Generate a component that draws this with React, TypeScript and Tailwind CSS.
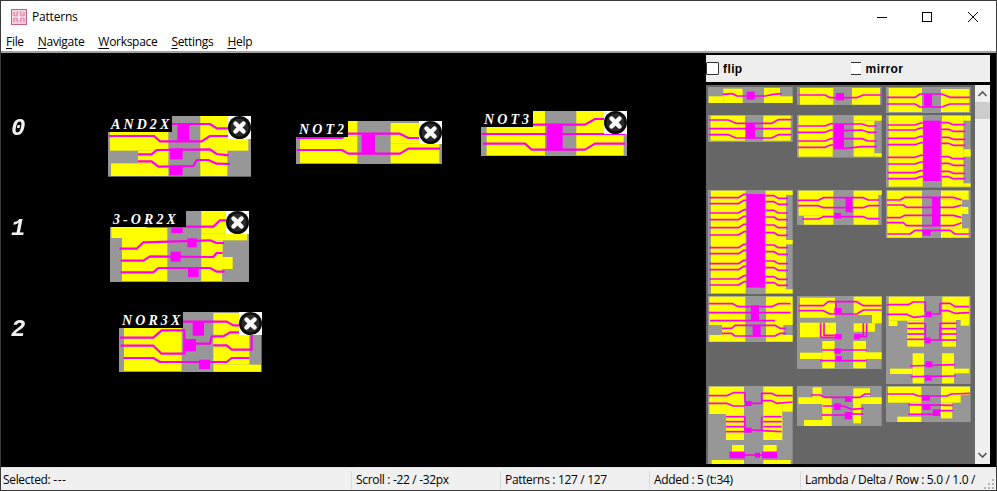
import React from 'react';

type Rect = [number, number, number, number];
type Art = { box: Rect; y: Rect[]; m: Rect[]; l: string[] };

const rects = (list: Rect[], fill: string) =>
  list.map(([a, b, c, d], i) => <rect key={i} x={a} y={b} width={c - a} height={d - b} fill={fill} />);

// coordinates are 3x screen pixels, read off the zoomed reference
const Layout: React.FC<{ art: Art; sw?: number }> = ({ art, sw = 5 }) => {
  const [a, b, c, d] = art.box;
  return (
    <svg width={(c - a) / 3} height={(d - b) / 3} viewBox={`${a} ${b} ${c - a} ${d - b}`} className="block">
      <rect x={a} y={b} width={c - a} height={d - b} fill="#979797" />
      {rects(art.y, '#ffff00')}
      {art.l.map((p, i) => (
        <polyline key={i} points={p} fill="none" stroke="#ff00ee" strokeWidth={sw} strokeLinejoin="round" />
      ))}
      {rects(art.m, '#ff00ff')}
    </svg>
  );
};

const fan = (ys: number[], x1: number, x2: number, dy: number) =>
  ys.map((y) => `${x1},${y} ${x2 - 25},${y} ${x2 - 8},${y + dy} ${x2},${y + dy}`);

const CloseBadge = () => (
  <div className="absolute top-0 right-0 w-[23px] h-[23px] bg-white">
    <svg width="23" height="23" viewBox="0 0 23 23" className="block blur-[0.5px]">
      <circle cx="11.5" cy="11.5" r="11.5" fill="#0c0c0c" />
      <circle cx="11.5" cy="11.5" r="9" fill="#2a2a2a" />
      <path d="M7.5 7.5 15.5 15.5M15.5 7.5 7.5 15.5" stroke="#fff" strokeWidth="4.4" strokeLinecap="round" />
    </svg>
  </div>
);

const PlacedCell: React.FC<{ className: string; name: string; labelW: string; art: Art }> = ({ className, name, labelW, art }) => (
  <div className={`absolute ${className}`}>
    <Layout art={art} sw={6.5} />
    <div className={`absolute top-0 left-0 h-[16px] bg-black text-white font-['Liberation_Serif',serif] font-bold italic text-[14px] leading-[18px] tracking-[3.1px] pl-[3px] whitespace-nowrap overflow-hidden ${labelW}`}>
      {name}
    </div>
    <CloseBadge />
  </div>
);

const and2x: Art = {
  box: [324, 348, 753, 530],
  y: [[330, 396, 505, 452], [414, 452, 505, 490], [333, 490, 505, 528], [601, 348, 684, 417], [601, 417, 745, 452], [601, 452, 682, 528]],
  m: [[532, 372, 568, 422], [510, 445, 548, 478], [508, 498, 548, 526]],
  l: [
    '516,372 630,372 650,385 684,385',
    '326,408 462,408 480,424 605,424 630,408 690,408',
    '414,463 455,463 470,450 630,448 650,462 686,466',
    '414,484 455,484 475,500 580,498 590,480 625,480 650,491 690,492',
  ],
};
const not2: Art = {
  box: [48, 94, 486, 224],
  y: [[60, 140, 232, 220], [204, 94, 232, 140], [332, 100, 486, 162], [332, 162, 478, 220]],
  m: [[245, 130, 285, 190]],
  l: ['50,145 185,145 205,132 360,132 385,145 420,145', '50,181 185,181 205,192 360,192 385,177 480,177'],
};
const not3: Art = {
  box: [603, 64, 1041, 200],
  y: [[620, 111, 795, 197], [759, 64, 795, 111], [889, 64, 1041, 132], [889, 132, 1031, 197]],
  m: [[800, 108, 848, 180]],
  l: ['759,105 915,105 945,88 975,88', '605,133 1035,133', '610,162 735,162 755,180 915,180 945,162 1035,162'],
};
const or2x: Art = {
  box: [330, 34, 747, 248],
  y: [[334, 81, 502, 115], [366, 115, 502, 244], [604, 34, 678, 102], [604, 102, 742, 122], [604, 122, 668, 172], [604, 172, 698, 208], [604, 208, 666, 244]],
  m: [[514, 81, 548, 100], [562, 116, 590, 143], [512, 156, 542, 186], [564, 202, 596, 232]],
  l: [
    '440,81 640,81 660,62 680,62',
    '358,147 410,147 430,128 630,122 650,130 672,130',
    '362,183 430,183 450,170 640,172 650,160 668,160',
    '362,218 460,218 475,205 630,205 650,216 674,216',
  ],
};
const nor3x: Art = {
  box: [357, 337, 785, 518],
  y: [[372, 384, 545, 514], [640, 340, 717, 404], [640, 404, 748, 495], [640, 495, 783, 516]],
  m: [[578, 366, 612, 408], [553, 418, 588, 455], [597, 480, 630, 508]],
  l: [
    '549,366 680,366 700,377 717,377',
    '360,414 460,414 485,392 553,392 553,465',
    '362,438 460,438 485,462 550,462',
    '370,475 460,475 480,487 680,487 695,475 748,475',
    '585,432 630,432 635,410 670,410 690,398 717,398',
    '640,437 680,437 695,450 755,450 755,404',
  ],
};

const thumbs: Art[] = [
  {
    box: [24, 110, 278, 158],
    y: [[70, 115, 128, 158], [26, 138, 70, 158], [192, 113, 240, 158], [240, 138, 278, 158]],
    m: [[140, 124, 164, 148]],
    l: ['68,132 98,130 110,137 195,137 220,132 245,130'],
  },
  {
    box: [291, 110, 545, 165],
    y: [[300, 113, 400, 163], [456, 113, 540, 163]],
    m: [[408, 128, 432, 150]],
    l: ['295,134 375,134 390,142 470,142 490,134 545,134'],
  },
  {
    box: [558, 110, 812, 188],
    y: [[566, 113, 666, 185], [723, 116, 808, 185]],
    m: [[672, 132, 696, 170]],
    l: ['560,141 645,141 660,131 725,131 750,141 810,141', '560,161 645,161 660,170 725,170 750,161 810,161'],
  },
  {
    box: [24, 195, 278, 276],
    y: [[32, 197, 135, 272], [190, 197, 272, 272]],
    m: [[138, 220, 165, 265]],
    l: [
      '26,210 85,210 108,220 215,220 235,209 275,209',
      '26,236 275,236',
      '26,254 85,254 108,264 215,264 235,254 275,254',
    ],
  },
  {
    box: [291, 195, 545, 323],
    y: [[296, 197, 398, 320], [461, 197, 545, 212], [461, 212, 523, 320], [523, 310, 545, 320]],
    m: [[401, 220, 432, 298]],
    l: [
      ...fan([228, 247, 273, 292], 293, 400, -7),
      '432,222 485,222 505,228 530,228',
      '432,242 485,240 505,247 530,247',
      '432,266 485,266 505,273 530,273',
      '432,296 485,290 505,290 530,290',
    ],
  },
  {
    box: [558, 195, 812, 413],
    y: [[566, 197, 668, 410], [726, 197, 790, 410], [790, 197, 812, 212], [790, 298, 812, 320], [790, 400, 812, 410]],
    m: [[670, 212, 722, 393]],
    l: [
      ...fan([225, 240, 265, 284, 322, 342, 368, 386], 562, 670, -6),
      ...[218, 238, 262, 280, 320, 340, 364, 380].map((y) => `724,${y} 745,${y} 760,${y + 6} 796,${y + 6}`),
    ],
  },
  {
    box: [24, 15, 278, 327],
    y: [[33, 17, 137, 325], [197, 17, 258, 325], [258, 17, 278, 30], [258, 165, 278, 178], [258, 313, 278, 325]],
    m: [[140, 27, 195, 308]],
    l: [
      ...fan([38, 56, 84, 104, 128, 150, 188, 206, 236, 254, 282, 300], 28, 140, -10),
      ...[32, 50, 76, 96, 120, 143, 180, 200, 228, 248, 275, 293].map((y) => `197,${y} 222,${y} 235,${y + 8} 264,${y + 8}`),
    ],
  },
  {
    box: [291, 15, 545, 122],
    y: [[296, 17, 400, 92], [312, 92, 400, 119], [461, 17, 535, 119], [535, 17, 545, 30]],
    m: [[437, 38, 457, 82], [403, 84, 423, 101]],
    l: [
      '293,46 355,46 370,38 490,38 505,45 538,45',
      '293,62 355,62 370,68 490,68 505,62 538,62',
      '306,102 355,102 370,95 490,95 505,101 538,101',
    ],
  },
  {
    box: [558, 15, 812, 161],
    y: [[562, 17, 666, 158], [723, 17, 806, 44], [723, 44, 786, 130], [786, 66, 805, 87], [723, 130, 806, 158]],
    m: [[696, 36, 720, 122], [668, 135, 692, 152]],
    l: [
      '560,45 600,45 615,37 760,37 785,45',
      '560,60 610,60 620,67 760,67 785,60',
      '560,98 600,98 615,91 760,91 785,98',
      '560,113 610,113 620,122 760,122 785,113',
      '562,147 630,147 645,136 750,136 765,147 808,147',
    ],
  },
  {
    box: [24, 18, 278, 156],
    y: [[28, 20, 136, 105], [66, 105, 136, 135], [28, 135, 136, 155], [198, 20, 278, 105], [198, 105, 250, 135], [198, 135, 278, 155]],
    m: [[153, 46, 177, 92], [158, 106, 182, 140]],
    l: [
      '26,41 98,41 115,50 215,50 235,41 272,41',
      '26,68 272,68',
      '30,92 225,92',
      '66,115 95,115 105,106 225,106 240,115 258,115',
      '66,130 95,130 105,138 225,138 240,130 258,130',
    ],
  },
  {
    box: [291, 18, 545, 237],
    y: [[300, 23, 405, 83], [300, 98, 408, 142], [461, 20, 545, 75], [516, 75, 545, 100], [461, 100, 525, 125], [367, 153, 404, 235], [460, 153, 498, 235], [300, 188, 367, 207], [498, 187, 545, 207]],
    m: [[403, 54, 425, 70], [403, 132, 425, 148], [462, 132, 480, 148], [403, 175, 422, 191], [408, 198, 426, 214]],
    l: [
      '295,47 370,47 385,35 470,35 490,47 545,47',
      '295,62 370,62 390,72 470,72 490,60 545,60',
      '408,35 408,60',
      '362,98 362,142 403,142',
      '372,98 372,136 403,136',
      '500,100 500,140 480,140',
      '490,100 490,135 480,135',
      '365,180 500,180',
      '360,212 500,212',
    ],
  },
  {
    box: [558, 18, 812, 282],
    y: [[566, 20, 672, 92], [566, 92, 592, 108], [622, 92, 672, 170], [727, 20, 808, 90], [782, 90, 808, 107], [727, 90, 768, 170], [638, 190, 672, 280], [726, 190, 762, 280], [570, 236, 638, 252], [762, 236, 808, 250]],
    m: [[676, 64, 695, 82], [674, 143, 692, 160], [677, 214, 697, 232], [675, 256, 695, 272]],
    l: [
      '560,44 625,44 640,36 676,36 676,66',
      '560,73 620,73 640,82 676,78',
      '695,72 720,72 720,40 750,40 765,50 808,50',
      '720,62 745,62 765,70 808,68',
      '622,100 676,100', '622,116 676,116', '622,132 676,132', '622,148 690,148',
      '720,100 770,100', '720,116 770,116', '720,132 770,132', '692,150 770,150',
      '676,100 676,150', '720,100 720,150',
      '630,228 765,224', '632,260 768,258',
    ],
  },
  {
    box: [24, 18, 278, 252],
    y: [[28, 20, 132, 102], [78, 102, 132, 180], [190, 20, 278, 72], [190, 72, 247, 180], [247, 72, 278, 95], [96, 195, 132, 215], [190, 195, 230, 215], [35, 240, 132, 252], [190, 240, 272, 252]],
    m: [[135, 63, 155, 78], [135, 143, 155, 158], [88, 215, 135, 235], [165, 218, 180, 233], [186, 215, 232, 235]],
    l: [
      '26,47 80,47 100,38 135,38 135,65',
      '26,70 80,70 100,78 135,78',
      '155,70 185,70 185,40 215,40 230,47 278,47',
      '185,62 215,62 230,70 278,66',
      '78,110 135,110', '78,125 135,125', '78,140 135,140', '78,155 135,155',
      '190,110 245,110', '190,125 245,125', '190,140 245,140', '155,150 245,155',
      '135,110 135,155', '185,110 185,150',
      '135,225 190,225',
    ],
  },
  {
    box: [291, 18, 545, 140],
    y: [[338, 22, 365, 52], [295, 52, 395, 72], [367, 72, 395, 120], [312, 120, 395, 138], [460, 25, 510, 48], [460, 48, 483, 130], [460, 52, 545, 72]],
    m: [[435, 50, 455, 66], [402, 70, 422, 90], [434, 96, 456, 118]],
    l: ['333,45 360,45 375,52 480,52 495,42 512,42', '368,78 430,78 455,88 492,85', '365,105 434,105', '456,102 490,102'],
  },
  {
    box: [558, 18, 812, 128],
    y: [[564, 20, 664, 68], [630, 68, 664, 106], [592, 110, 664, 126], [723, 20, 810, 45], [723, 45, 782, 68], [723, 68, 757, 115]],
    m: [[666, 45, 690, 62], [667, 72, 692, 90], [698, 88, 720, 108]],
    l: ['560,42 640,42 655,48 740,48 755,42 810,40', '625,74 760,76', '625,103 698,103', '720,92 760,92'],
  },
];

const MenuItem: React.FC<{ first: string; rest: string }> = ({ first, rest }) => (
  <span>
    <span className="underline underline-offset-2">{first}</span>
    {rest}
  </span>
);

const AppIcon = () => (
  <svg width="16" height="16" viewBox="0 0 16 16" className="block">
    <rect x="0.5" y="0.5" width="15" height="15" fill="#f6cfdc" stroke="#c9608c" />
    <path d="M3 3V7H7M3 13V9H7M13 3V7H9M13 13V9H9M5 5H7V2M5 11H7V14M11 5H9V2M11 11H9V14" fill="none" stroke="#d9709c" />
    <path d="M8 1V15M1 8H15" stroke="#fdf2f6" />
  </svg>
);

const Digit: React.FC<{ className: string; children: React.ReactNode }> = ({ className, children }) => (
  <div className={`absolute left-[10px] font-['Liberation_Mono',monospace] font-bold italic text-[24px] leading-[28px] text-[#f0f0f0] blur-[0.6px] ${className}`}>
    {children}
  </div>
);

const StatusCell: React.FC<{ className: string; children: React.ReactNode }> = ({ className, children }) => (
  <div className={`shrink-0 pl-[4px] border-l border-[#d9d9d9] whitespace-nowrap ${className}`}>{children}</div>
);

export default function App() {
  return (
    <div className="w-[997px] h-[491px] flex flex-col overflow-hidden bg-white border border-[#3a3a3a] font-['Open_Sans',sans-serif] text-[12px] text-black">
      <div className="h-[32px] shrink-0 flex items-center pl-[10px]">
        <AppIcon />
        <span className="ml-[5px] tracking-[-0.2px]">Patterns</span>
        <div className="ml-auto flex items-center">
          <svg width="101" height="12" viewBox="0 0 101 12" className="block mr-[18px]">
            <path d="M0 6.5H10" stroke="#000" />
            <rect x="45.5" y="1.5" width="9" height="9" fill="none" stroke="#000" />
            <path d="M91 1 101 11M101 1 91 11" stroke="#000" />
          </svg>
        </div>
      </div>
      <div className="h-[18px] shrink-0 flex items-center gap-[14px] pl-[5px] tracking-[-0.3px] leading-[18px]">
        <MenuItem first="F" rest="ile" />
        <MenuItem first="N" rest="avigate" />
        <MenuItem first="W" rest="orkspace" />
        <MenuItem first="S" rest="ettings" />
        <MenuItem first="H" rest="elp" />
      </div>
      <div className="h-[2px] shrink-0 bg-[#a3a3a3]" />

      <div className="flex-1 min-h-0 flex bg-black">
        <div className="relative flex-1">
          <Digit className="top-[62px]">0</Digit>
          <Digit className="top-[162px]">1</Digit>
          <Digit className="top-[263px]">2</Digit>
          <PlacedCell className="left-[107px] top-[63px]" name="AND2X" labelW="w-[64px]" art={and2x} />
          <PlacedCell className="left-[295px] top-[68px]" name="NOT2" labelW="w-[52px]" art={not2} />
          <PlacedCell className="left-[480px] top-[58px]" name="NOT3" labelW="w-[52px]" art={not3} />
          <PlacedCell className="left-[109px] top-[158px]" name="3-OR2X" labelW="w-[76px]" art={or2x} />
          <PlacedCell className="left-[118px] top-[259px]" name="NOR3X" labelW="w-[64px]" art={nor3x} />
        </div>

        <div className="w-[284px] shrink-0 mr-[6px] pt-[2px] pb-[3px] flex flex-col gap-[3px]">
          <div className="h-[27px] shrink-0 bg-[#eeeeee] flex items-center font-['Liberation_Sans',sans-serif] font-bold text-[12px] tracking-[0.4px]">
            <div className="w-[13px] h-[13px] bg-white border border-[#333] rounded-[1px]" />
            <span className="ml-[4px]">flip</span>
            <div className="ml-[108px] w-[10px] h-[13px] bg-white border-y border-[#333]" />
            <span className="ml-[5px]">mirror</span>
          </div>
          <div className="flex-1 min-h-0 flex">
            <div className="flex-1 overflow-hidden bg-[#666666] pl-[2px] pt-[2px] grid grid-cols-[85px_85px_85px] gap-x-[4px] gap-y-[2px] content-start items-start">
              {thumbs.map((t, i) => (
                <Layout key={i} art={t} />
              ))}
            </div>
            <div className="w-[15px] shrink-0 bg-[#f0f0f0] flex flex-col items-center justify-between">
              <div className="w-full">
                <svg width="15" height="17" viewBox="0 0 15 17" className="block">
                  <path d="M3.5 11 7.5 7 11.5 11" fill="none" stroke="#555" strokeWidth="1.6" />
                </svg>
                <div className="h-[17px] bg-[#cdcdcd]" />
              </div>
              <svg width="15" height="17" viewBox="0 0 15 17" className="block">
                <path d="M3.5 6 7.5 10 11.5 6" fill="none" stroke="#555" strokeWidth="1.6" />
              </svg>
            </div>
          </div>
        </div>
      </div>

      <div className="h-[23px] shrink-0 bg-[#f0f0f0] border-t border-[#e2e2e2] flex items-center pt-[1px] tracking-[-0.33px] relative">
        <div className="w-[350px] shrink-0 pl-[2px]">
          Selected: <span className="tracking-[0.6px]">---</span>
        </div>
        <StatusCell className="w-[149px]">Scroll : -22 / -32px</StatusCell>
        <StatusCell className="w-[149px]">Patterns : 127 / 127</StatusCell>
        <StatusCell className="w-[151px]">Added : 5 (t:34)</StatusCell>
        <StatusCell className="flex-1">Lambda / Delta / Row : 5.0 / 1.0 /</StatusCell>
        <svg width="12" height="12" viewBox="0 0 12 12" className="absolute right-[1px] bottom-[1px]">
          <path d="M9 2h2v2H9zM5 6h2v2H5zM9 6h2v2H9zM1 10h2v2H1zM5 10h2v2H5zM9 10h2v2H9z" fill="#b5b5b5" />
        </svg>
      </div>
    </div>
  );
}
